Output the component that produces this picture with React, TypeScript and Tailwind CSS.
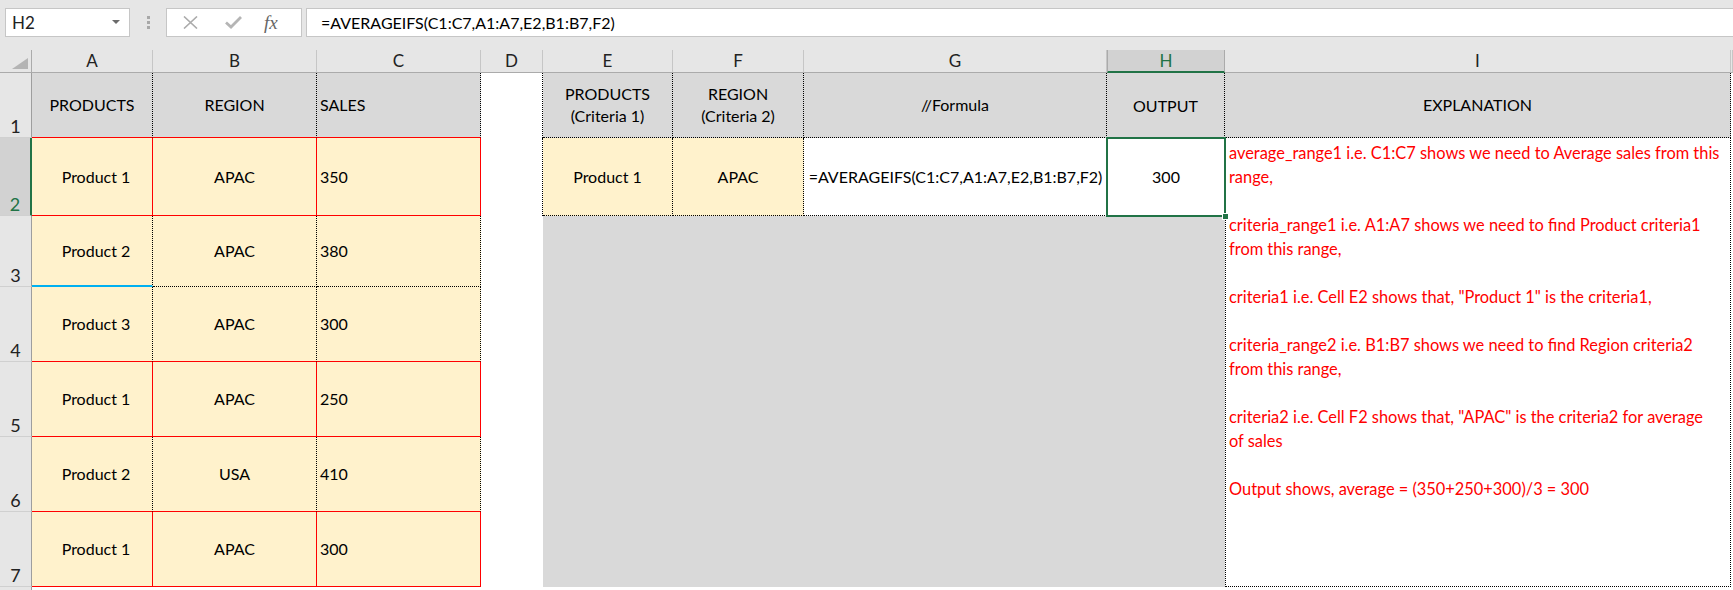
import React from 'react';

// border helpers, written out in full so Tailwind picks them up
const redR = 'border-r border-r-[#ff0000]';
const redB = 'border-b border-b-[#ff0000]';
const dotR = 'border-r border-r-black [border-right-style:dotted]';
const dotB = 'border-b border-b-black [border-bottom-style:dotted]';
const dotL = 'border-l border-l-black [border-left-style:dotted]';

const colHead = 'flex items-center justify-center bg-[#e6e6e6] border-r border-r-[#c6c6c6] border-b border-b-[#ababab] text-[17px] text-[#222]';
const rowHead = 'flex items-end justify-center bg-[#e6e6e6] border-r border-r-[#9e9e9e] border-b border-b-[#d0d0d0] text-[18px] leading-[21px] text-[#222]';

const data = [
  { product: 'Product 1', region: 'APAC', sales: '350', red: true },
  { product: 'Product 2', region: 'APAC', sales: '380', red: false },
  { product: 'Product 3', region: 'APAC', sales: '300', red: false },
  { product: 'Product 1', region: 'APAC', sales: '250', red: true },
  { product: 'Product 2', region: 'USA', sales: '410', red: false },
  { product: 'Product 1', region: 'APAC', sales: '300', red: true },
];

const explanation = [
  'average_range1 i.e. C1:C7 shows we need to Average sales from this',
  'range,',
  '',
  'criteria_range1 i.e. A1:A7 shows we need to find Product criteria1',
  'from this range,',
  '',
  'criteria1 i.e. Cell E2 shows that, "Product 1" is the criteria1,',
  '',
  'criteria_range2 i.e. B1:B7 shows we need to find Region criteria2',
  'from this range,',
  '',
  'criteria2 i.e. Cell F2 shows that, "APAC" is the criteria2 for average',
  'of sales',
  '',
  'Output shows, average = (350+250+300)/3 = 300',
];

function FormulaBar() {
  return (
    <div className="flex h-[50px] items-start bg-[#e6e6e6] pt-[8px]">
      <div className="ml-[5px] flex h-[29px] w-[125px] items-center justify-between border border-[#c6c6c6] bg-white pl-[6px] pr-[9px] text-[17px] text-[#222]">
        <span>H2</span>
        <svg width="8" height="5" viewBox="0 0 8 5">
          <path d="M0 0 L8 0 L4 4 Z" fill="#6b6b6b" />
        </svg>
      </div>
      <div className="ml-[17px] mt-[8px] flex flex-col gap-[2px]">
        <div className="h-[3px] w-[3px] bg-[#a8a8a8]" />
        <div className="h-[3px] w-[3px] bg-[#a8a8a8]" />
        <div className="h-[3px] w-[3px] bg-[#a8a8a8]" />
      </div>
      <div className="ml-[16px] flex h-[29px] w-[136px] items-center border border-[#c6c6c6] bg-white">
        <svg className="ml-[16px]" width="15" height="13" viewBox="0 0 15 13">
          <path d="M1 0.5 L14 12.5 M14 0.5 L1 12.5" stroke="#ababab" strokeWidth="1.6" />
        </svg>
        <svg className="ml-[27px]" width="17" height="13" viewBox="0 0 17 13">
          <path d="M1 6.5 L6 11 L16 1" stroke="#b5b5b5" strokeWidth="2.8" fill="none" />
        </svg>
        <span className="ml-[22px] [font-family:'Liberation_Serif',serif] text-[19px] italic leading-none text-[#666]">fx</span>
      </div>
      <div className="ml-[4px] flex h-[29px] flex-1 items-center border border-r-0 border-[#c6c6c6] bg-white pl-[14px] text-[16px] text-black">
        =AVERAGEIFS(C1:C7,A1:A7,E2,B1:B7,F2)
      </div>
    </div>
  );
}

export default function App() {
  return (
    <div className="h-[590px] w-[1733px] overflow-hidden bg-white [font-family:Lato,sans-serif]">
      <FormulaBar />
      <div className="grid grid-cols-[32px_121px_164px_164px_62px_130px_131px_303px_118px_506px_1fr] grid-rows-[23px_65px_78px_71px_75px_75px_75px_75px_3px]">
        {/* column headers */}
        <div className="relative bg-[#e6e6e6] border-r border-r-[#ababab] border-b border-b-[#ababab]">
          <svg className="absolute left-[12px] top-[8px]" width="16" height="11" viewBox="0 0 16 11">
            <path d="M16 0 L16 11 L0 11 Z" fill="#b4b4b4" />
          </svg>
        </div>
        <div className={`${colHead} bg-[#9fd5b7]`}>A</div>
        <div className={colHead}>B</div>
        <div className={colHead}>C</div>
        <div className={colHead}>D</div>
        <div className={colHead}>E</div>
        <div className={colHead}>F</div>
        <div className={colHead}>G</div>
        <div className="flex items-center justify-center bg-[#d2d2d2] border-x border-x-[#ababab] border-b-2 border-b-[#217346] text-[17px] text-[#217346]">H</div>
        <div className={colHead}>I</div>
        <div className={colHead}></div>

        {/* row 1 */}
        <div className={rowHead}>1</div>
        <div className={`flex items-center justify-center bg-[#d9d9d9] text-[16px] ${dotR} ${redB}`}>PRODUCTS</div>
        <div className={`flex items-center justify-center bg-[#d9d9d9] text-[16px] ${dotR} ${redB}`}>REGION</div>
        <div className={`flex items-center bg-[#d9d9d9] pl-[3px] text-[16px] ${dotR} ${redB}`}>SALES</div>
        <div className={`bg-white ${dotR}`}></div>
        <div className={`flex flex-col items-center justify-center bg-[#d9d9d9] text-[16px] leading-[22px] ${dotR} ${dotB}`}>
          <span>PRODUCTS</span>
          <span>(Criteria 1)</span>
        </div>
        <div className={`flex flex-col items-center justify-center bg-[#d9d9d9] text-[16px] leading-[22px] ${dotR} ${dotB}`}>
          <span>REGION</span>
          <span>(Criteria 2)</span>
        </div>
        <div className={`flex items-center justify-center bg-[#d9d9d9] text-[16px] ${dotR} ${dotB}`}>//Formula</div>
        <div className={`flex items-center justify-center bg-[#d9d9d9] text-[16px] ${dotR}`}>OUTPUT</div>
        <div className={`flex items-center justify-center bg-[#d9d9d9] text-[16px] ${dotR} ${dotB}`}>EXPLANATION</div>
        <div className="bg-white"></div>

        {/* merged explanation I2:I7 */}
        <div className={`col-start-10 row-start-3 row-span-6 bg-white pl-[3px] pt-[3px] text-[16.4px] leading-[24px] text-[#ff0000] ${dotL} ${dotR} ${dotB}`}>
          {explanation.map((line, i) => (
            <div key={i} className="h-[24px] whitespace-nowrap">{line}</div>
          ))}
        </div>
        {/* grey block E3:H7 */}
        <div className="col-start-6 col-span-4 row-start-4 row-span-5 bg-[#d9d9d9]"></div>

        {data.map((row, i) => {
          const next = data[i + 1];
          const right = row.red ? redR : dotR;
          const bottom = row.red || (next && next.red) ? redB : dotB;
          const n = i + 2;
          return (
            <React.Fragment key={n}>
              {n === 2 ? (
                <div className="flex items-end justify-center bg-[#d2d2d2] border-r-2 border-r-[#217346] border-b border-b-[#d0d0d0] text-[18px] leading-[21px] text-[#217346]">2</div>
              ) : (
                <div className={rowHead}>{n}</div>
              )}
              <div className={`flex items-center justify-center bg-[#fff2cc] pl-[8px] text-[16px] ${right} ${n === 3 ? 'border-b-2 border-b-[#00b0f0]' : bottom}`}>{row.product}</div>
              <div className={`flex items-center justify-center bg-[#fff2cc] text-[16px] ${right} ${bottom}`}>{row.region}</div>
              <div className={`flex items-center bg-[#fff2cc] pl-[3px] text-[16px] ${right} ${bottom}`}>{row.sales}</div>
              <div className={n === 2 ? `bg-white ${dotR}` : 'bg-white'}></div>
              {n === 2 && (
                <>
                  <div className={`flex items-center justify-center bg-[#fff2cc] text-[16px] ${dotR} ${dotB}`}>Product 1</div>
                  <div className={`flex items-center justify-center bg-[#fff2cc] text-[16px] ${dotR} ${dotB}`}>APAC</div>
                  <div className={`flex items-center justify-center bg-white text-[16px] ${dotB}`}>=AVERAGEIFS(C1:C7,A1:A7,E2,B1:B7,F2)</div>
                  <div className="relative flex items-center justify-center bg-white text-[16px]">
                    300
                    <div className="absolute -left-[1px] -top-[1px] -right-[1px] -bottom-[1px] border-2 border-[#217346]" />
                    <div className="absolute -right-[4px] -bottom-[4px] h-[7px] w-[7px] border border-white bg-[#217346]" />
                  </div>
                </>
              )}
              <div className="bg-white"></div>
            </React.Fragment>
          );
        })}

        {/* row 8, only a sliver shows */}
        <div className="bg-[#e6e6e6] border-r border-r-[#9e9e9e]"></div>
      </div>
    </div>
  );
}
